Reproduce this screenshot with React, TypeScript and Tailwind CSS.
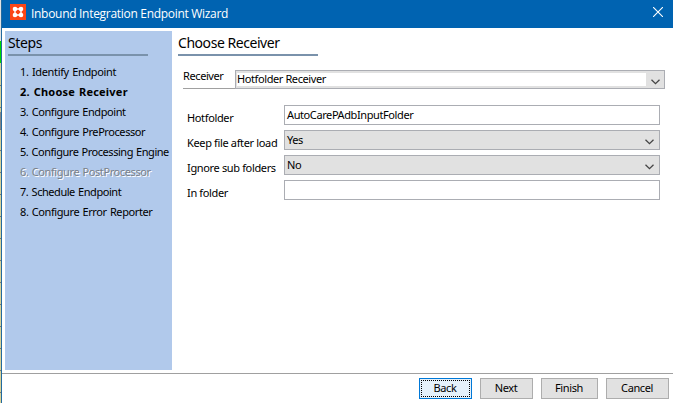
import type { ReactNode } from 'react';

const steps = [
  { label: '1. Identify Endpoint', cls: 'tracking-[-0.34px]' },
  { label: '2. Choose Receiver', cls: 'font-bold tracking-[0.22px]' },
  { label: '3. Configure Endpoint', cls: 'tracking-[-0.42px]' },
  { label: '4. Configure PreProcessor', cls: 'tracking-[-0.42px]' },
  { label: '5. Configure Processing Engine', cls: 'tracking-[-0.47px]' },
  { label: '6. Configure PostProcessor', cls: 'tracking-[-0.4px] text-[#7b8088] [text-shadow:1px_1px_0_#fff]' },
  { label: '7. Schedule Endpoint', cls: 'tracking-[-0.45px]' },
  { label: '8. Configure Error Reporter', cls: 'tracking-[-0.4px]' },
];

const rowLines = [85, 107, 129, 150, 172, 194, 216, 238, 260, 282, 304, 326, 348, 370, 392];

function Chevron() {
  return (
    <svg width="9" height="6" viewBox="0 0 9 6" fill="none" stroke="#444" strokeWidth="1.3">
      <path d="M0.5 0.8 L4.5 4.6 L8.5 0.8" />
    </svg>
  );
}

function Field({ label, value, select }: { label: string; value: string; select?: boolean }) {
  return (
    <div className="flex h-5">
      <div className="w-[97px] shrink-0 pt-[5px] leading-4 tracking-[-0.35px]">{label}</div>
      <div
        className={`flex h-5 w-[376px] items-center justify-between border border-[#abadb3] pr-[5px] pl-[2px] leading-4 ${select ? 'bg-[#e1e1e1]' : 'bg-white'}`}
      >
        <span>{value}</span>
        {select && (
          <span className="pt-[3px]">
            <Chevron />
          </span>
        )}
      </div>
    </div>
  );
}

function Button({ className, children }: { className: string; children: ReactNode }) {
  return (
    <button className={`flex h-[21px] items-center justify-center border pr-px pb-px leading-4 ${className}`}>
      {children}
    </button>
  );
}

export default function App() {
  return (
    <div className="flex h-[403px] w-[673px] overflow-hidden bg-white font-['Noto_Sans','Open_Sans',sans-serif] text-[11px] tracking-[-0.4px] whitespace-nowrap text-black">
      <div className="relative w-[2px] shrink-0 border-r border-[#236a9f] bg-[#d9d298]">
        <div className="h-[41px] bg-[#e3e3e3]" />
        <div className="h-[22px] bg-[#00d800]" />
        {rowLines.map((y) => (
          <div key={y} className="absolute left-0 h-px w-px bg-[#77797a]" style={{ top: y }} />
        ))}
        <div className="absolute top-[112px] left-0 h-[17px] w-px bg-[#858585]" />
      </div>
      <div className="flex min-w-0 grow flex-col">
        <header className="flex h-7 shrink-0 items-center bg-[#0063b1] pr-[10px] pl-2 text-white">
          <svg width="16" height="16" viewBox="0 0 16 16" className="relative -top-[2px]">
            <path fill="#fb4616" d="M0 0h16v16H0z" />
            <path stroke="#fff" strokeWidth="1.4" fill="none" d="M5 5h6v6H5z" />
            <g fill="#fff">
              <circle cx="5" cy="5" r="2.3" />
              <circle cx="11" cy="5" r="2.3" />
              <circle cx="5" cy="11" r="2.3" />
              <circle cx="11" cy="11" r="2.3" />
            </g>
          </svg>
          <span className="ml-[5px] grow font-['Open_Sans','Noto_Sans',sans-serif] text-[12px] tracking-[-0.3px]">
            Inbound Integration Endpoint Wizard
          </span>
          <svg width="10" height="10" viewBox="0 0 10 10" stroke="#fff" strokeWidth="1.1" className="relative -top-[2px]">
            <path d="M0 0L10 10M10 0L0 10" />
          </svg>
        </header>
        <div className="flex h-[346px] shrink-0 border-b border-[#a0a0a0] pt-[3px] pl-[3px]">
          <aside className="h-[339px] w-[167px] shrink-0 bg-[#b1c9eb] pl-[3px]">
            <h2 className="h-[25px] w-[140px] border-b-2 border-[#7a92ab] pt-px text-[14px] leading-[22px]">Steps</h2>
            <ol className="pt-[6px] pl-3 [word-spacing:0.8px]">
              {steps.map((s) => (
                <li key={s.label} className={`h-5 leading-5 ${s.cls}`}>
                  {s.label}
                </li>
              ))}
            </ol>
          </aside>
          <main className="pl-[6px]">
            <h2 className="h-[25px] w-[140px] border-b-2 border-[#7a92ab] pt-px text-[14px] leading-[22px] tracking-[-0.45px]">Choose Receiver</h2>
            <div className="mt-[14px] ml-[5px] flex h-[19px] w-[482px] border-b border-[#a0a0a0]">
              <div className="w-[52px] -translate-y-[2px] leading-4">Receiver</div>
              <div className="flex h-[19px] w-[430px] items-center border border-[#abadb3] bg-[#e1e1e1] pl-px">
                <span className="flex h-[13px] w-[409px] items-center bg-white">Hotfolder Receiver</span>
                <span className="ml-[5px] pt-[5px]"><Chevron /></span>
              </div>
            </div>
            <div className="mt-4 ml-[9px] flex flex-col gap-[5px]">
              <Field label="Hotfolder" value="AutoCarePAdbInputFolder" />
              <Field label="Keep file after load" value="Yes" select />
              <Field label="Ignore sub folders" value="No" select />
              <Field label="In folder" value="" />
            </div>
          </main>
        </div>
        <footer className="flex justify-end gap-2 pt-1 pr-1">
          <Button className="w-[53px] border-[#0078d7] bg-[#e5f1fb] pl-px pt-px">
            <span className="flex h-[17px] w-full items-center justify-center border border-dotted border-black pr-px pb-px">Back</span>
          </Button>
          <Button className="w-[53px] border-[#adadad] bg-[#e1e1e1]">Next</Button>
          <Button className="w-[57px] border-[#adadad] bg-[#e1e1e1]">Finish</Button>
          <Button className="w-[63px] border-[#adadad] bg-[#e1e1e1]">Cancel</Button>
        </footer>
      </div>
    </div>
  );
}
